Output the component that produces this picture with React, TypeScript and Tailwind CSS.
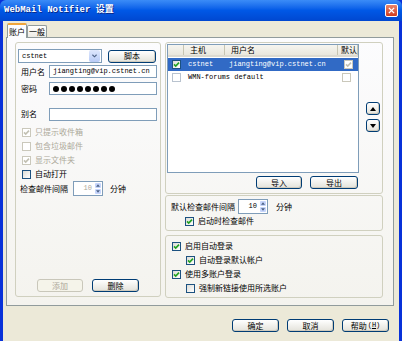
import type { ReactNode } from 'react';

const cjk = "font-['Noto_Sans_CJK_SC',sans-serif]";
const mono = "font-['Liberation_Mono','Noto_Sans_CJK_SC',monospace]";

function Btn({ className = '', disabled = false, children }: { className?: string; disabled?: boolean; children: ReactNode }) {
  return (
    <div
      className={`h-[13px] flex items-center justify-center rounded-[3px] border text-[8px] leading-none ${
        disabled
          ? 'border-[#c9c7ba] bg-[#f5f4ea] text-[#aca899]'
          : 'border-[#003c74] bg-linear-to-b from-white to-[#e3e2da] text-black shadow-[inset_-1px_-1px_0_#cfcabd]'
      } ${className}`}
    >
      {children}
    </div>
  );
}

function Box({ checked = false, disabled = false, light = false }: { checked?: boolean; disabled?: boolean; light?: boolean }) {
  const border = disabled ? 'border-[#cac8bb] bg-white' : light ? 'border-[#b9c3cf] bg-white' : 'border-[#1c5180] bg-linear-to-br from-[#dcdcd7] to-white';
  return (
    <span className={`w-[9px] h-[9px] shrink-0 border flex items-center justify-center ${border}`}>
      {checked && (
        <svg viewBox="0 0 7 7" className="w-[7px] h-[7px]">
          <path d="M1 3.4 L2.7 5.1 L6 1.6" stroke={disabled ? '#c2c0b2' : '#21a121'} strokeWidth="1.6" fill="none" />
        </svg>
      )}
    </span>
  );
}

function Check({ checked = false, disabled = false, label, className = '' }: { checked?: boolean; disabled?: boolean; label: string; className?: string }) {
  return (
    <div className={`flex items-center gap-[4px] h-[14px] ${className}`}>
      <Box checked={checked} disabled={disabled} />
      <span className={disabled ? 'text-[#aca899]' : 'text-black'}>{label}</span>
    </div>
  );
}

function Arrow({ up }: { up: boolean }) {
  return (
    <svg viewBox="0 0 5 3" className="w-[4px] h-[3px]">
      <path d={up ? 'M0 3 L2.5 0 L5 3 Z' : 'M0 0 L2.5 3 L5 0 Z'} fill="#4d6185" />
    </svg>
  );
}

function Spin({ disabled = false }: { disabled?: boolean }) {
  return (
    <div className="w-[30px] h-[15px] border border-[#7f9db9] bg-white flex items-center">
      <span className={`flex-1 text-right pr-[2px] ${mono} text-[7px] leading-none ${disabled ? 'text-[#aca899]' : 'text-black'}`}>10</span>
      <div className="w-[8px] h-full flex flex-col gap-px p-px">
        <div className="flex-1 rounded-[1px] bg-[#c6d5fb] flex items-center justify-center">
          <Arrow up />
        </div>
        <div className="flex-1 rounded-[1px] bg-[#c6d5fb] flex items-center justify-center">
          <Arrow up={false} />
        </div>
      </div>
    </div>
  );
}

function Field({ children }: { children?: ReactNode }) {
  return <div className="w-[108px] h-[13px] border border-[#7f9db9] bg-white flex items-center pl-[3px]">{children}</div>;
}

export default function App() {
  return (
    <div className={`w-[402px] h-[341px] overflow-hidden flex flex-col bg-[#0831d9] ${cjk} text-[8px] leading-none text-black`}>
      {/* title bar */}
      <div className="h-[21px] shrink-0 flex items-center justify-between pl-[4px] pr-[4px] bg-linear-to-b from-[#3b8cf7] via-[#0058e6] to-[#0047d0] rounded-t-[6px]">
        <span className={`${mono} font-bold text-[9px] text-white [text-shadow:1px_1px_0_#0a2a8a]`}>WebMail Notifier 设置</span>
        <div className="w-[13px] h-[13px] rounded-[2px] border border-white bg-linear-to-b from-[#e9846a] to-[#cf3a1c] flex items-center justify-center">
          <svg viewBox="0 0 8 8" className="w-[7px] h-[7px]">
            <path d="M1 1 L7 7 M7 1 L1 7" stroke="white" strokeWidth="1.6" />
          </svg>
        </div>
      </div>

      {/* body */}
      <div className="flex-1 mx-[3px] bg-[#ece9d8] flex flex-col pt-[2px]">
        {/* tabs */}
        <div className="flex items-end h-[15px] ml-[4px] relative z-10">
          <div className="w-[20px] h-[15px] bg-[#fcfcfe] border border-b-0 border-[#919b9c] border-t-[2px] border-t-[#f0a53a] rounded-t-[2px] flex items-center justify-center">账户</div>
          <div className="w-[20px] h-[12px] mb-px bg-linear-to-b from-white to-[#ecebe5] border border-b-0 border-[#919b9c] rounded-t-[2px] flex items-center justify-center">一般</div>
        </div>
        <div className="ml-[3px] -mt-px w-[388px] h-[269px] border border-[#919b9c] bg-linear-to-b from-[#fcfcfe] to-[#f4f3ee] flex gap-[4px] pl-[8px] pt-[4px]">
          {/* left group */}
          <div className="w-[146px] h-[255px] border border-[#d0d0bf] rounded-[3px] flex flex-col">
            <div className="flex items-center mt-[6px] ml-[2px] h-[14px]">
              <div className="w-[84px] h-[14px] border border-[#7f9db9] bg-white flex items-center pl-[3px]">
                <span className={`flex-1 ${mono} text-[7px]`}>cstnet</span>
                <div className="w-[11px] h-[12px] mr-px rounded-[2px] bg-linear-to-b from-[#dfe8fd] to-[#b8cbf6] flex items-center justify-center">
                  <svg viewBox="0 0 6 4" className="w-[5px] h-[4px]">
                    <path d="M0.5 0.5 L3 3 L5.5 0.5" stroke="#4d6185" strokeWidth="1.3" fill="none" />
                  </svg>
                </div>
              </div>
              <Btn className="w-[48px] ml-[6px]">脚本</Btn>
            </div>
            <div className="flex items-center mt-[2px] ml-[5px] h-[13px]">
              <span className="w-[28px]">用户名</span>
              <Field>
                <span className={`${mono} text-[7px]`}>jiangting@vip.cstnet.cn</span>
              </Field>
            </div>
            <div className="flex items-center mt-[4px] ml-[5px] h-[13px]">
              <span className="w-[28px]">密码</span>
              <Field>
                <span className="flex gap-[2px]">
                  {Array.from({ length: 8 }).map((_, i) => (
                    <span key={i} className="w-[6px] h-[6px] rounded-full bg-black" />
                  ))}
                </span>
              </Field>
            </div>
            <div className="flex items-center mt-[12px] ml-[5px] h-[14px]">
              <span className="w-[28px]">别名</span>
              <Field />
            </div>
            <div className="mt-[4px] ml-[6px] flex flex-col">
              <Check checked disabled label="只提示收件箱" />
              <Check disabled label="包含垃圾邮件" />
              <Check checked disabled label="显示文件夹" />
              <Check label="自动打开" />
            </div>
            <div className="flex items-center ml-[4px] h-[15px]">
              <span className="w-[53px]">检查邮件间隔</span>
              <Spin disabled />
              <span className="ml-[7px]">分钟</span>
            </div>
            <div className="flex-1" />
            <div className="flex justify-center gap-[9px] mb-[4px]">
              <Btn disabled className="w-[46px]">添加</Btn>
              <Btn className="w-[47px]">删除</Btn>
            </div>
          </div>

          {/* right column */}
          <div className="w-[218px] flex flex-col">
            <div className="h-[152px] border border-[#d0d0bf] rounded-[3px] flex flex-col">
              <div className="flex">
                <div className="ml-px mt-px w-[192px] h-[129px] border border-[#7f9db9] bg-white flex flex-col">
                  <div className="h-[12px] flex bg-linear-to-b from-[#f6f5f0] to-[#e9e7dd] border-b-2 border-[#dcdad0]">
                    <div className="w-[16px] border-r border-[#c7c5b2]" />
                    <div className="w-[41px] pl-[6px] border-r border-[#c7c5b2] flex items-center">主机</div>
                    <div className="w-[113px] pl-[6px] border-r border-[#c7c5b2] flex items-center">用户名</div>
                    <div className="w-[20px] pl-[3px] border-r border-[#c7c5b2] flex items-center">默认</div>
                  </div>
                  <div className="h-[13px] mt-px flex items-center bg-[#316ac5] text-white">
                    <div className="w-[16px] pl-[4px]">
                      <Box checked />
                    </div>
                    <div className={`w-[41px] pl-[4px] ${mono} text-[7px]`}>cstnet</div>
                    <div className={`w-[113px] pl-[4px] ${mono} text-[7px]`}>jiangting@vip.cstnet.cn</div>
                    <div className="w-[20px] pl-[6px]">
                      <Box checked disabled />
                    </div>
                  </div>
                  <div className="h-[13px] flex items-center">
                    <div className="w-[16px] pl-[4px]">
                      <Box light />
                    </div>
                    <div className={`${mono} text-[7px] pl-[4px]`}>WMN-forums default</div>
                    <div className="flex-1" />
                    <div className="w-[20px] pl-[6px] mr-[2px]">
                      <Box disabled />
                    </div>
                  </div>
                </div>
                <div className="ml-[7px] mt-[59px] flex flex-col gap-[4px]">
                  <Btn className="w-[14px] h-[12px]">
                    <svg viewBox="0 0 6 4" className="w-[6px] h-[4px]">
                      <path d="M0 4 L3 0 L6 4 Z" fill="black" />
                    </svg>
                  </Btn>
                  <Btn className="w-[14px] h-[12px]">
                    <svg viewBox="0 0 6 4" className="w-[6px] h-[4px]">
                      <path d="M0 0 L3 4 L6 0 Z" fill="black" />
                    </svg>
                  </Btn>
                </div>
              </div>
              <div className="flex gap-[8px] ml-[90px] mt-[3px]">
                <Btn className="w-[46px]">导入</Btn>
                <Btn className="w-[48px]">导出</Btn>
              </div>
            </div>

            <div className="mt-px h-[36px] border border-[#d0d0bf] rounded-[3px] flex flex-col pt-[3px]">
              <div className="flex items-center ml-[5px] h-[15px]">
                <span className="w-[67px]">默认检查邮件间隔</span>
                <Spin />
                <span className="ml-[8px]">分钟</span>
              </div>
              <Check checked label="启动时检查邮件" className="ml-[19px]" />
            </div>

            <div className="mt-[4px] h-[63px] border border-[#d0d0bf] rounded-[3px] flex flex-col pt-[3px]">
              <Check checked label="启用自动登录" className="ml-[6px]" />
              <Check checked label="自动登录默认帐户" className="ml-[20px]" />
              <Check checked label="使用多账户登录" className="ml-[6px]" />
              <Check label="强制新链接使用所选账户" className="ml-[20px]" />
            </div>
          </div>
        </div>

        {/* bottom buttons */}
        <div className="flex justify-end gap-[8px] mt-[13px] pr-[10px]">
          <Btn className="w-[47px]">确定</Btn>
          <Btn className="w-[47px]">取消</Btn>
          <Btn className="w-[47px]">
            帮助<span className={`${mono} text-[7px] ml-[1px]`}>(<span className="underline">H</span>)</span>
          </Btn>
        </div>
      </div>
    </div>
  );
}
